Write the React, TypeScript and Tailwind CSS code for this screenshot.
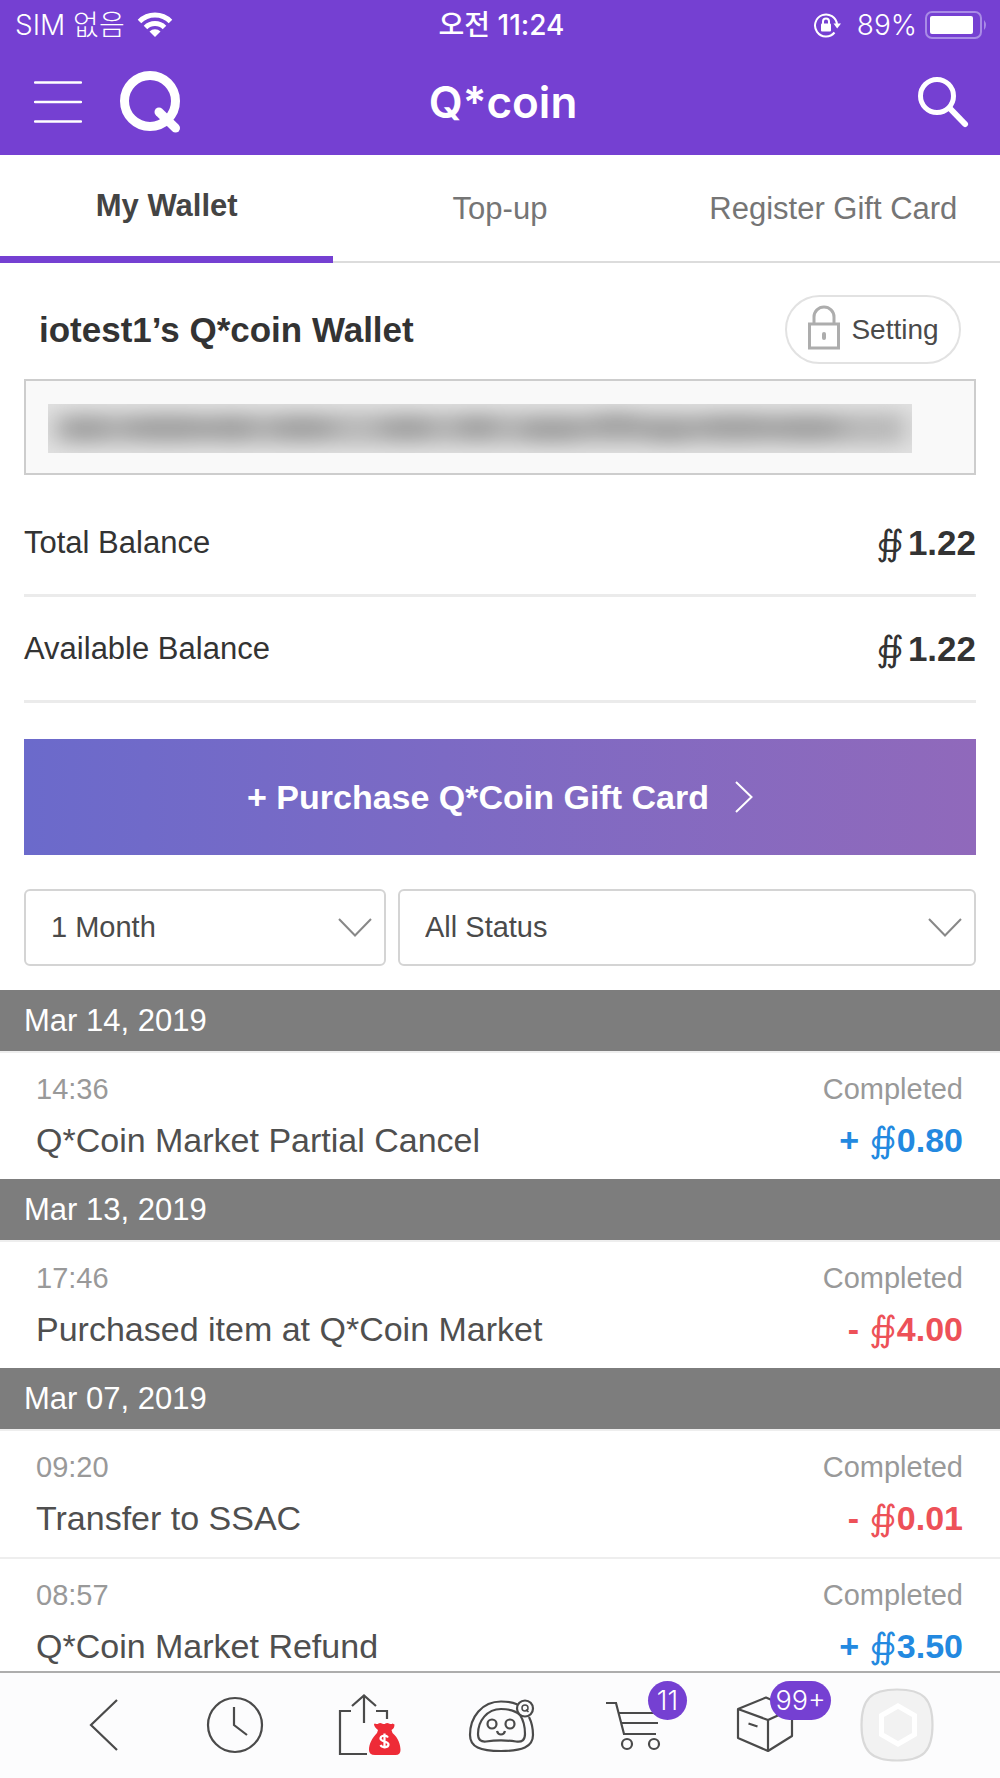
import type { ReactNode } from "react";

type Entry = { time: string; title: string; status: string; sign: "+" | "-"; amount: string };
type Day = { date: string; entries: Entry[] };

const days: Day[] = [
  {
    date: "Mar 14, 2019",
    entries: [{ time: "14:36", title: "Q*Coin Market Partial Cancel", status: "Completed", sign: "+", amount: "0.80" }],
  },
  {
    date: "Mar 13, 2019",
    entries: [{ time: "17:46", title: "Purchased item at Q*Coin Market", status: "Completed", sign: "-", amount: "4.00" }],
  },
  {
    date: "Mar 07, 2019",
    entries: [
      { time: "09:20", title: "Transfer to SSAC", status: "Completed", sign: "-", amount: "0.01" },
      { time: "08:57", title: "Q*Coin Market Refund", status: "Completed", sign: "+", amount: "3.50" },
    ],
  },
];

function Coin() {
  return <span className="font-['DejaVu_Sans',sans-serif] text-[35px] font-normal">∯</span>;
}

function StatusBar() {
  return (
    <div className="grid h-[50px] grid-cols-[1fr_auto_1fr] items-center pr-3 pl-[15px] font-['Inter','Noto_Sans_CJK_KR',sans-serif] text-[28px] leading-8">
      <div className="flex items-center gap-3 font-light">
        <span>SIM 없음</span>
        <svg width="36" height="26" viewBox="0 0 36 26" fill="none" stroke="#fff" strokeWidth="5" aria-hidden="true">
          <path d="M2.5 9.5a22 22 0 0 1 31 0" />
          <path d="M8.5 15.5a13.500 13.500 0 0 1 19 0" />
          <path d="M18 25l-5.500-5.500a7.800 7.800 0 0 1 11 0z" fill="#fff" stroke="none" />
        </svg>
      </div>
      <span className="font-medium">오전 11:24</span>
      <div className="flex items-center justify-end">
        <svg width="30" height="28" viewBox="0 0 30 28" fill="none" stroke="#fff" strokeWidth="2" aria-hidden="true">
          <path d="M21.500 21.500a11 11 0 1 1 2.500-8" />
          <path d="M20.500 12.500h7.500l-3.800 5z" fill="#fff" stroke="none" />
          <rect x="8" y="12.500" width="10" height="8" rx="1" fill="#fff" stroke="none" />
          <path d="M10 13v-2.500a3 3 0 0 1 6 0V13" />
        </svg>
        <span className="mr-2 ml-[14px] font-light">89%</span>
        <svg width="63" height="28" viewBox="0 0 63 28" aria-hidden="true">
          <rect x="1" y="1" width="55" height="26" rx="6" fill="none" stroke="#a98be6" strokeWidth="2" />
          <rect x="5" y="5" width="43" height="18" rx="2" fill="#fff" />
          <path d="M59 9q4 5 0 10z" fill="#a98be6" />
        </svg>
      </div>
    </div>
  );
}

function TitleBar() {
  return (
    <div className="grid h-[105px] grid-cols-[1fr_auto_1fr] items-center pr-7 pb-[2px] pl-[34px]">
      <div className="flex items-center gap-9">
        <button type="button" aria-label="Menu">
          <svg width="48" height="44" viewBox="0 0 48 44" stroke="#fff" strokeWidth="2.500" strokeLinecap="round">
            <path d="M1 2.500h46M1 22h46M1 41.500h46" />
          </svg>
        </button>
        <a href="#home" aria-label="Home">
          <svg width="62" height="62" viewBox="0 0 62 62" fill="none" stroke="#fff" strokeLinecap="round">
            <circle cx="32" cy="30" r="25.500" strokeWidth="9" />
            <path d="M41 41l16.500 16" strokeWidth="9" />
          </svg>
        </a>
      </div>
      <h1 className="font-['Inter',sans-serif] text-[44px] leading-[56px] font-semibold">Q*coin</h1>
      <button type="button" aria-label="Search" className="justify-self-end">
        <svg width="54" height="54" viewBox="0 0 54 54" fill="none" stroke="#fff" strokeLinecap="round">
          <circle cx="19" cy="21" r="16.500" strokeWidth="5" />
          <path d="M32 33.500L47 49" strokeWidth="6" />
        </svg>
      </button>
    </div>
  );
}

function Tabs() {
  return (
    <nav className="grid h-[108px] grid-cols-3 border-b-2 border-[#dcdcdc] text-[31px] leading-9 text-[#757575]">
      <a href="#wallet" aria-current="page" className="-mb-[2px] flex items-center justify-center border-b-[7px] border-[#7540d2] font-bold text-[#444]">
        My Wallet
      </a>
      <a href="#topup" className="flex items-center justify-center pt-[2px]">Top-up</a>
      <a href="#giftcard" className="flex items-center justify-center pt-[2px]">Register Gift Card</a>
    </nav>
  );
}

function HiddenAddress() {
  const blobs = [
    [38, 25, 26], [120, 24, 50], [185, 24, 26], [255, 24, 36], [360, 24, 30], [430, 23, 24], [505, 26, 36],
    [570, 20, 30], [622, 27, 26], [690, 23, 44], [760, 24, 40],
  ];
  return (
    <div className="flex h-24 items-center border-2 border-[#cdcdcd] bg-[#f9f9f9] pt-[3px] pr-[62px] pl-[22px]" role="img" aria-label="Wallet address, hidden">
      <svg className="h-[49px] w-full" viewBox="0 0 866 49" preserveAspectRatio="none">
        <defs>
          <filter id="soft" x="-10%" y="-100%" width="120%" height="300%">
            <feGaussianBlur stdDeviation="12 9" />
          </filter>
        </defs>
        <rect width="866" height="49" fill="#e2e2e2" />
        <g filter="url(#soft)">
          <rect x="6" y="8" width="854" height="33" fill="#bababa" />
          {blobs.map(([x, y, w]) => (
            <ellipse key={x} cx={x} cy={y} rx={w} ry="13" fill="#a3a3a3" />
          ))}
        </g>
      </svg>
    </div>
  );
}

function Balance({ label, value }: { label: string; value: string }) {
  return (
    <div className="flex h-[106px] items-center justify-between border-b-[3px] border-[#ebebeb] text-[#333]">
      <dt className="text-[31px] leading-9">{label}</dt>
      <dd className="flex items-center gap-1 text-[35px] leading-10 font-bold">
        <Coin />
        {value}
      </dd>
    </div>
  );
}

function Select({ label, options }: { label: string; options: string[] }) {
  return (
    <div className="relative">
      <select aria-label={label} className="h-[77px] w-full appearance-none rounded-md border-2 border-[#d4d4d4] bg-white pr-16 pl-[25px] text-[29px] text-[#4a4a4a]">
        {options.map((o) => (
          <option key={o}>{o}</option>
        ))}
      </select>
      <svg className="pointer-events-none absolute top-[29px] right-[14px]" width="34" height="20" viewBox="0 0 34 20" fill="none" stroke="#888" strokeWidth="2" aria-hidden="true">
        <path d="M1 1l16 16.500L33 1" />
      </svg>
    </div>
  );
}

function Row({ entry }: { entry: Entry }) {
  return (
    <li className="flex h-32 shrink-0 justify-between border-t-2 border-[#eee] pt-[18px] pr-[37px] pl-9">
      <div>
        <div className="text-[29px] leading-9 text-[#999]">{entry.time}</div>
        <div className="mt-[11px] text-[34px] leading-[44px] text-[#4f4f4f]">{entry.title}</div>
      </div>
      <div className="text-right">
        <div className="text-[29px] leading-9 text-[#999]">{entry.status}</div>
        <div className={`mt-[11px] flex items-center justify-end text-[34px] leading-[44px] font-bold ${entry.sign === "+" ? "text-[#2389e0]" : "text-[#ed5158]"}`}>
          <span className="mr-[10px]">{entry.sign}</span>
          <Coin />
          <span>{entry.amount}</span>
        </div>
      </div>
    </li>
  );
}

function NavButton({ label, badge, badgeClass, children }: { label: string; badge?: string; badgeClass?: string; children: ReactNode }) {
  return (
    <button type="button" aria-label={label} className="relative flex flex-1 items-center justify-center pb-[2px]">
      <svg width="100" height="100" viewBox="0 0 100 100" fill="none" stroke="#4a4a4a" strokeWidth="2.200">
        {children}
      </svg>
      {badge && (
        <span className={`absolute top-2 flex h-[39px] items-center justify-center rounded-full bg-[#7540d2] font-['Inter',sans-serif] text-[27px] leading-8 font-light text-white ${badgeClass}`}>
          {badge}
        </span>
      )}
    </button>
  );
}

function BottomBar() {
  return (
    <nav className="flex h-[107px] shrink-0 border-t-2 border-[#adadad] bg-[#fcfcfd] px-[38px]">
      <NavButton label="Back">
        <path d="M63 25L37 50l26 25" />
      </NavButton>
      <NavButton label="History">
        <circle cx="49" cy="50" r="27" />
        <path d="M48 32v18l13 10" />
      </NavButton>
      <NavButton label="Share">
        <path d="M46 21v27M34 31l12-10.500L58 31M33 36H22v43h27M58 36h11v8" />
        <path d="M57 48.500q2 1 3.500 0t3.500 0 3.500 0 3.500 0 3.500 0l2 1q0 4-3 5.500l1 3c6 5 8 12 8 17q0 5-5 5H57q-6 0-6-5c0-6 3-12 8-17l1-3q-4-3-4-6z" fill="#ee2b37" stroke="none" />
        <path d="M70 62.500c-2-3-7.500-2-7.500 1 0 3.500 8 2.500 8 6 0 3.300-6.500 3.500-8 .5M66.500 58.500v15" stroke="#fff" strokeWidth="2.200" />
      </NavButton>
      <NavButton label="My page">
        <path d="M67.500 29.500C62 27 56 26.500 51 26.500 32 26.500 20 42 20 60c0 12 10 16 31 16s32-4 32-16c0-7-1-12-4-18" />
        <path d="M70 40c-5-5-11-6-19-6-14 0-23 12-23 25 0 6 3 8 8 7.500 10-1.500 20-1.500 30 0 6 1 9-1.500 9-7.500 0-7-1-13-5-19z" />
        <circle cx="42" cy="49" r="4.500" />
        <circle cx="60" cy="49" r="4.500" />
        <path d="M47 56q1 3.500 4 3.500t4-3.500" />
        <circle cx="75" cy="33.500" r="8" fill="#fcfcfd" />
        <circle cx="75" cy="33" r="3" strokeWidth="1.500" />
        <path d="M76 34.500l2.500 2.500" strokeWidth="1.500" />
      </NavButton>
      <NavButton label="Cart" badge="11" badgeClass="left-[82px] w-[39px]">
        <path d="M24 28h10l8 31h32M37 38h39M39 48h37" />
        <circle cx="45" cy="69" r="5" />
        <circle cx="72" cy="69" r="5" />
      </NavButton>
      <NavButton label="Orders" badge="99+" badgeClass="left-[72px] w-[61px]">
        <path d="M24 34l28-11.500L78 34v27L54 76 24 63zM24 34l30 11 24-11M54 45v31M34.500 48.500l9 3" strokeLinejoin="round" />
      </NavButton>
      <NavButton label="Assistant">
        <path d="M51 14.500c26 0 35.500 9 35.500 35.500S77 85.500 51 85.500 15.500 76 15.500 50 25 14.500 51 14.500z" fill="#f2f2f2" stroke="#d9d9d9" />
        <path d="M52 31l16.500 9.500v19L52 69l-16.500-9.500v-19z" stroke="#fff" strokeWidth="5" />
      </NavButton>
    </nav>
  );
}

export default function App() {
  return (
    <div className="flex h-dvh flex-col overflow-hidden bg-white font-['Liberation_Sans',Arial,sans-serif]">
      <header className="shrink-0 bg-[#7540d2] text-white">
        <StatusBar />
        <TitleBar />
      </header>
      <main className="min-h-0 flex-1 overflow-y-auto [scrollbar-width:none]">
        <Tabs />
        <section className="px-6">
          <div className="flex h-[116px] items-center justify-between pt-4 pr-[15px] pl-[15px]">
            <h2 className="pt-[2px] text-[35px] leading-10 font-bold text-[#333]">iotest1’s Q*coin Wallet</h2>
            <button type="button" className="flex h-[69px] w-44 items-center justify-center gap-[10px] rounded-full border-2 border-[#e2e2e2] text-[28px] leading-8 text-[#4a4a4a]">
              <svg width="34" height="48" viewBox="0 0 34 48" fill="none" stroke="#adadad" strokeWidth="3" aria-hidden="true">
                <path d="M2.500 19h29v24h-29z" />
                <path d="M7 19v-7a10 10 0 0 1 20 0v7" />
                <path d="M17 29v4" strokeWidth="4" strokeLinecap="round" />
              </svg>
              <span className="pt-[2px]">Setting</span>
            </button>
          </div>
          <HiddenAddress />
          <dl className="mt-4">
            <Balance label="Total Balance" value="1.22" />
            <Balance label="Available Balance" value="1.22" />
          </dl>
          <button type="button" className="mt-9 flex h-[116px] w-full items-center justify-center gap-[26px] bg-linear-to-r from-[#6b6acb] to-[#9069bb] text-[34px] leading-10 font-bold text-white">
            + Purchase Q*Coin Gift Card
            <svg width="18" height="32" viewBox="0 0 18 32" fill="none" stroke="#fff" strokeWidth="2" aria-hidden="true">
              <path d="M1 1l15.500 15L1 31" />
            </svg>
          </button>
          <div className="mt-[34px] grid grid-cols-[362fr_578fr] gap-3">
            <Select label="Period" options={["1 Month", "3 Months", "6 Months"]} />
            <Select label="Status" options={["All Status", "Completed", "Pending"]} />
          </div>
        </section>
        <div className="mt-6">
          {days.map((day) => (
            <section key={day.date}>
              <h3 className="flex h-[61px] items-center bg-[#7d7d7d] px-6 text-[31px] leading-9 text-white">{day.date}</h3>
              <ul>
                {day.entries.map((entry) => (
                  <Row key={entry.time} entry={entry} />
                ))}
              </ul>
            </section>
          ))}
        </div>
      </main>
      <BottomBar />
    </div>
  );
}
